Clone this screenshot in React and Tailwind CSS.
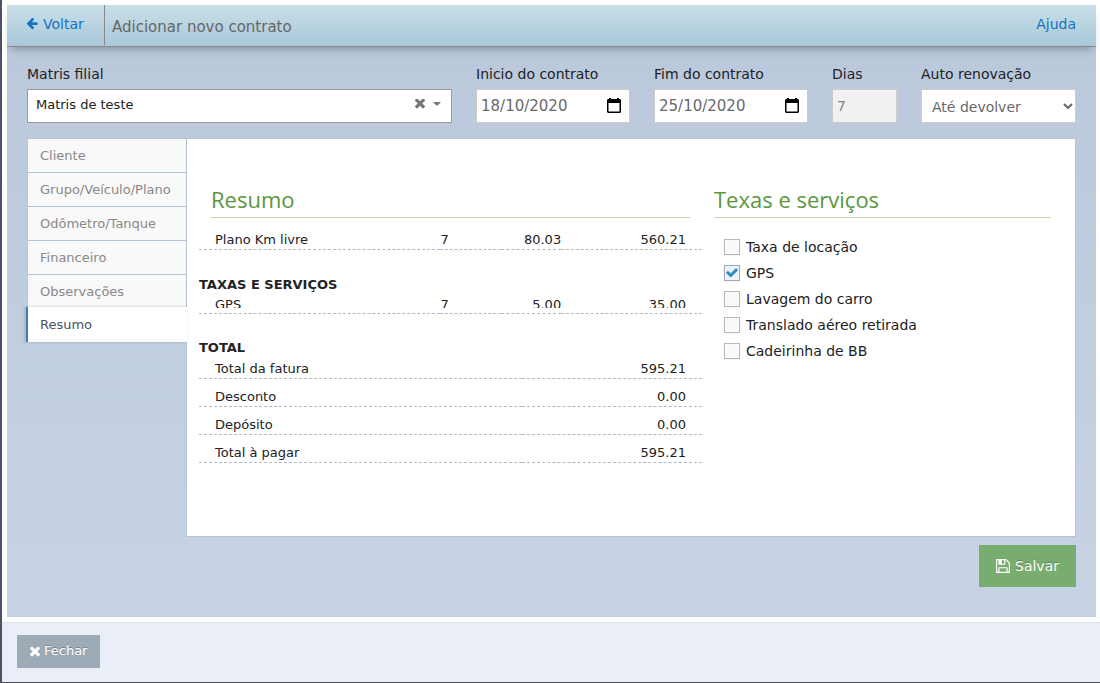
import React, { useState } from "react";

const PATHS = {
  arrow: "M1664 896v128q0 53-32.5 90.5t-84.5 37.5h-704l293 294q38 36 38 90t-38 90l-75 76q-37 37-90 37-52 0-91-37l-651-652q-37-37-37-90 0-52 37-91l651-650q38-38 91-38 52 0 90 38l75 74q38 38 38 91t-38 91l-293 293h704q52 0 84.5 37.5t32.5 90.5z",
  times: "M1490 1322q0 40-28 68l-136 136q-28 28-68 28t-68-28l-294-294-294 294q-28 28-68 28t-68-28l-136-136q-28-28-28-68t28-68l294-294-294-294q-28-28-28-68t28-68l136-136q28-28 68-28t68 28l294 294 294-294q28-28 68-28t68 28l136 136q28 28 28 68t-28 68l-294 294 294 294q28 28 28 68z",
  check: "M1671 566q0 40-28 68l-724 724-136 136q-28 28-68 28t-68-28l-136-136-362-362q-28-28-28-68t28-68l136-136q28-28 68-28t68 28l294 295 656-657q28-28 68-28t68 28l136 136q28 28 28 68z",
  save: "M384 1536h768v-384h-768v384zM1280 1536h128v-896q0-14-10-38.5t-20-34.5l-281-281q-10-10-34-20t-39-10v416q0 40-28 68t-68 28h-576q-40 0-68-28t-28-68v-416h-128v1280h128v-416q0-40 28-68t68-28h832q40 0 68 28t28 68v416zM896 608v-320q0-13-9.5-22.5t-22.5-9.5h-192q-13 0-22.5 9.5t-9.5 22.5v320q0 13 9.5 22.5t22.5 9.5h192q13 0 22.5-9.5t9.5-22.5zM1536 640v928q0 40-28 68t-68 28h-1344q-40 0-68-28t-28-68v-1344q0-40 28-68t68-28h928q40 0 88 20t76 48l280 280q28 28 48 76t20 88z",
};

function Icon({ name, box, className }) {
  return (
    <svg viewBox={box} className={className} fill="currentColor" aria-hidden="true">
      <path d={PATHS[name]} />
    </svg>
  );
}

function DateField({ id, label, value }) {
  const [text, setText] = useState(value);
  return (
    <div className="w-[154px]">
      <label htmlFor={id} className="block leading-5">{label}</label>
      <div className="mt-[5px] flex h-[34px] items-center border border-[#ccc] bg-white pr-2">
        <input
          id={id}
          value={text}
          onChange={(e) => setText(e.target.value)}
          className="h-full min-w-0 flex-1 bg-transparent pl-1 text-[15px] text-[#696969] outline-none"
        />
        <svg viewBox="0 0 14 15" className="mb-[2px] h-[15px] w-[14px]" aria-hidden="true">
          <path d="M2 0h2v1h6V0h2v1h1l1 1v12l-1 1H1l-1-1V2l1-1h1zM1.500 5v8.500h11V5z" fill="#000" fillRule="evenodd" />
        </svg>
      </div>
    </div>
  );
}

const TABS = ["Cliente", "Grupo/Veículo/Plano", "Odômetro/Tanque", "Financeiro", "Observações", "Resumo"];

const TOTALS = [
  ["Total da fatura", "595.21"],
  ["Desconto", "0.00"],
  ["Depósito", "0.00"],
  ["Total à pagar", "595.21"],
];

const SERVICES = ["Taxa de locação", "GPS", "Lavagem do carro", "Translado aéreo retirada", "Cadeirinha de BB"];

function Line({ name, qty, price, total, clipped }) {
  const cell = clipped ? "h-[11px] overflow-hidden leading-4" : "leading-4";
  return (
    <tr className="border-b border-dashed border-[#b0b8cb]">
      <td className={clipped ? "pt-[2px] pb-[5px] pl-4" : "pb-[1px] pl-4"}><div className={cell}>{name}</div></td>
      <td className={clipped ? "pt-[2px] pb-[5px]" : "pb-[1px]"}><div className={cell}>{qty}</div></td>
      <td className={clipped ? "pt-[2px] pb-[5px] text-right" : "pb-[1px] text-right"}><div className={cell}>{price}</div></td>
      <td className={clipped ? "pt-[2px] pr-4 pb-[5px] text-right" : "pr-4 pb-[1px] text-right"}><div className={cell}>{total}</div></td>
    </tr>
  );
}

export default function App() {
  const [active, setActive] = useState("Resumo");
  const [chosen, setChosen] = useState(["GPS"]);
  const toggle = (s) => setChosen((c) => (c.includes(s) ? c.filter((x) => x !== s) : [...c, s]));

  return (
    <div className="flex min-h-screen flex-col border-b border-l-2 border-b-[#4a4d55] border-l-[#4b5263] bg-white font-['DejaVu_Sans',Verdana,sans-serif] text-sm text-[#222]">
      <div className="mt-[5px] mr-1 ml-[5px] bg-linear-to-b from-[#bac8db] to-[#c7d3e4] pb-[30px]">
        <header className="flex h-[42px] items-start border-b border-[#888] bg-linear-to-b from-[#c9dfe8] to-[#a8c8da] pr-5 shadow-[0_6px_8px_-4px_rgba(80,90,100,0.5)]">
          <a href="#voltar" className="flex h-10 w-[98px] items-center gap-[5px] border-r border-[#888] pb-[2px] pl-[19px] text-[#1172c4]">
            <Icon name="arrow" box="64 190 1664 1664" className="h-3 w-3" />
            Voltar
          </a>
          <h1 className="flex-1 pl-[7px] text-[15px] leading-[44px] text-[#666]">Adicionar novo contrato</h1>
          <a href="#ajuda" className="leading-[38px] text-[#1172c4]">Ajuda</a>
        </header>

        <form className="px-5 pt-[17px]" onSubmit={(e) => e.preventDefault()}>
          <div className="flex gap-6">
            <div className="min-w-0 flex-1">
              <label htmlFor="filial" className="block leading-5">Matris filial</label>
              <div className="mt-[5px] flex h-[34px] items-center border border-[#999] bg-white pr-[10px] pb-[4px] text-[#777]">
                <input id="filial" defaultValue="Matris de teste" className="min-w-0 flex-1 bg-transparent pt-[2px] pl-2 text-[13px] text-[#222] outline-none" />
                <button type="button" aria-label="Limpar">
                  <Icon name="times" box="302 430 1188 1188" className="h-[10px] w-[10px]" />
                </button>
                <button type="button" aria-label="Abrir lista" className="ml-2">
                  <svg viewBox="0 0 8 4" className="h-1 w-2" fill="currentColor" aria-hidden="true"><path d="M0 0h8L4 4z" /></svg>
                </button>
              </div>
            </div>
            <DateField id="inicio" label="Inicio do contrato" value="18/10/2020" />
            <DateField id="fim" label="Fim do contrato" value="25/10/2020" />
            <div className="w-[65px]">
              <label htmlFor="dias" className="block leading-5">Dias</label>
              <input id="dias" disabled defaultValue="7" className="mt-[5px] block h-[34px] w-full border border-[#ccc] bg-[#f1f1f1] pl-1 text-[#848484]" />
            </div>
            <div className="w-[155px]">
              <label htmlFor="auto" className="block leading-5">Auto renovação</label>
              <div className="relative mt-[5px]">
                <select id="auto" className="block h-[34px] w-full appearance-none border border-[#ccc] bg-white pt-[2px] pl-[10px] text-[#696969]">
                  <option>Até devolver</option>
                </select>
                <svg viewBox="0 0 10 6" className="pointer-events-none absolute top-[14px] right-[3px] h-[6px] w-[10px]" fill="none" stroke="#666" strokeWidth="2" aria-hidden="true"><path d="M1 1l4 4 4-4" /></svg>
              </div>
            </div>
          </div>

          <div className="mt-[15px] flex items-start">
            <nav className="relative -mr-px w-40 shrink-0 text-[13px]">
              {TABS.map((t) => (
                <button
                  key={t}
                  type="button"
                  onClick={() => setActive(t)}
                  className={
                    t === active
                      ? "relative -mt-px -ml-px block h-[35px] w-[161px] border-l-2 border-[#4080b0] bg-white pt-[2px] pl-3 text-left text-[#495066] shadow-[-1px_0_3px_rgba(0,0,0,0.2)]"
                      : "block h-[34px] w-full border-t border-r border-l border-[#b3c3d6] bg-[#f9f9f9] pt-[2px] pl-3 text-left text-[#888]"
                  }
                >
                  {t}
                </button>
              ))}
            </nav>

            <main className="flex min-h-[399px] min-w-0 flex-1 gap-6 border border-[#b5c5d8] bg-white px-6 pt-[44px]">
              <section className="min-w-0 flex-[479]">
                <h2 className="border-b border-[#c2d8b4] pb-[2px] font-['Open_Sans',sans-serif] text-[22px] leading-8 text-[#59983b]">Resumo</h2>
                <div className="-mx-3 pt-[14px]">
                  <table className="w-full table-fixed border-collapse text-[13px]">
                    <colgroup>
                      <col className="w-[48%]" />
                      <col className="w-[12%]" />
                      <col className="w-[12%]" />
                      <col className="w-[28%]" />
                    </colgroup>
                    <tbody>
                      <Line name="Plano Km livre" qty="7" price="80.03" total="560.21" />
                      <tr>
                        <th colSpan="4" className="pt-[25px] text-left text-[13px] leading-5 font-bold">TAXAS E SERVIÇOS</th>
                      </tr>
                      <Line name="GPS" qty="7" price="5.00" total="35.00" clipped />
                    </tbody>
                  </table>
                  <h3 className="pt-6 text-[13px] leading-5 font-bold">TOTAL</h3>
                  <table className="w-full border-collapse text-[13px]">
                    <tbody>
                      {TOTALS.map(([name, value]) => (
                        <tr key={name} className="h-7 border-b border-dashed border-[#b0b8cb] align-bottom first:h-5">
                          <td className="pb-[1px] pl-4 leading-4">{name}</td>
                          <td className="pr-4 pb-[1px] text-right leading-4">{value}</td>
                        </tr>
                      ))}
                    </tbody>
                  </table>
                </div>
              </section>

              <section className="min-w-0 flex-[337]">
                <h2 className="border-b border-[#c2d8b4] pb-[2px] font-['Open_Sans',sans-serif] text-[22px] leading-8 text-[#59983b]">Texas e serviços</h2>
                <div className="flex flex-col gap-[6px] pt-[19px] pl-[10px]">
                  {SERVICES.map((s) => (
                    <label key={s} className="flex h-5 items-center gap-[6px]">
                      <span className="relative h-4 w-4">
                        <input
                          type="checkbox"
                          checked={chosen.includes(s)}
                          onChange={() => toggle(s)}
                          className="block h-4 w-4 appearance-none border border-[#b8b8b8] bg-[#fafafa] shadow-[0_1px_2px_rgba(0,0,0,0.05)] checked:border-[#9aaabb] checked:bg-[#edf2fb]"
                        />
                        {chosen.includes(s) && (
                          <Icon name="check" box="100 200 1600 1500" className="pointer-events-none absolute top-[2px] left-[2px] h-3 w-3 text-[#2b8cc4]" />
                        )}
                      </span>
                      {s}
                    </label>
                  ))}
                </div>
              </section>
            </main>
          </div>

          <div className="mt-2 flex justify-end">
            <button type="submit" className="flex h-[42px] items-center gap-[5px] bg-[#78ad6f] px-[17px] text-white [text-shadow:0_-1px_0_rgba(0,0,0,0.25)]">
              <Icon name="save" box="0 128 1536 1536" className="h-[14px] w-[14px]" />
              Salvar
            </button>
          </div>
        </form>
      </div>

      <footer className="mt-[5px] flex-1 border-t border-[#dde2ec] bg-[#eaeef7] px-[15px] pt-3">
        <button type="button" className="flex h-[33px] items-center gap-1 bg-[#9cabb5] px-[13px] text-[13px] text-white [text-shadow:0_-1px_0_rgba(0,0,0,0.25)]">
          <Icon name="times" box="302 430 1188 1188" className="h-[10px] w-[10px]" />
          Fechar
        </button>
      </footer>
    </div>
  );
}
